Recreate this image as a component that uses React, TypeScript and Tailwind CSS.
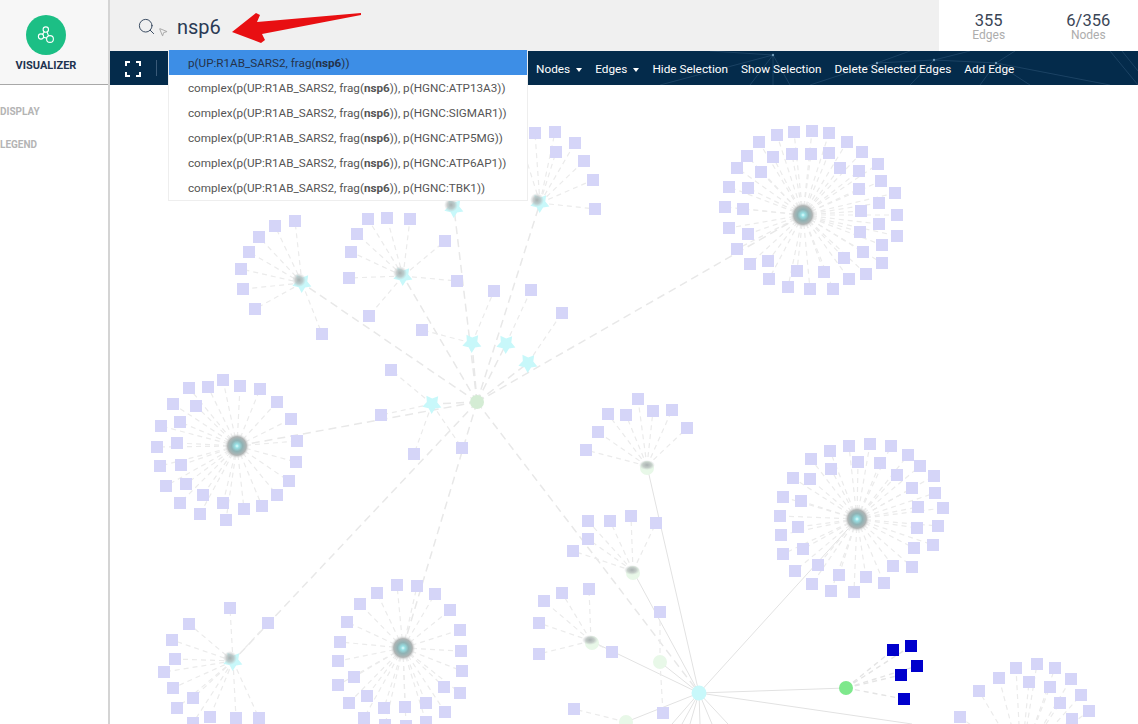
import { MousePointer2, Search } from "lucide-react";

type Pt = [number, number];

// each fan is a hub with its dashed leaf nodes, coordinates are page pixels
const fans: { hub: Pt; kids: Pt[] }[] = [
  {
    hub: [803, 215],
    kids: [[777, 135], [794, 132], [812, 131], [829, 133], [847, 142], [862, 152], [878, 164], [881, 181], [895, 193], [897, 215], [897, 236], [882, 245], [882, 263], [866, 274], [849, 279], [833, 289], [810, 289], [788, 287], [769, 279], [750, 264], [737, 249], [729, 228], [725, 207], [729, 187], [737, 168], [747, 156], [759, 142], [773, 157], [792, 154], [811, 154], [829, 153], [840, 168], [859, 171], [859, 189], [879, 203], [861, 211], [879, 224], [860, 232], [863, 252], [844, 258], [824, 272], [797, 271], [768, 261], [748, 234], [743, 209], [748, 188], [761, 172]],
  },
  {
    hub: [237, 446],
    kids: [[223, 380], [189, 388], [208, 387], [240, 386], [260, 389], [277, 402], [173, 404], [196, 406], [291, 419], [180, 422], [161, 426], [297, 441], [177, 443], [157, 447], [296, 462], [181, 465], [160, 466], [289, 481], [186, 484], [166, 486], [203, 495], [277, 495], [180, 503], [262, 506], [223, 503], [244, 509], [200, 514], [226, 520]],
  },
  {
    hub: [857, 519],
    kids: [[870, 444], [849, 446], [891, 446], [830, 451], [908, 455], [811, 459], [920, 466], [858, 462], [880, 463], [831, 469], [897, 475], [934, 476], [793, 478], [810, 479], [912, 488], [935, 493], [783, 497], [801, 501], [943, 508], [918, 507], [780, 516], [798, 527], [938, 526], [917, 528], [781, 535], [933, 545], [914, 548], [803, 549], [783, 554], [893, 566], [912, 567], [818, 565], [795, 571], [839, 575], [866, 577], [884, 583], [812, 584], [831, 591], [854, 592]],
  },
  {
    hub: [403, 648],
    kids: [[397, 585], [417, 586], [377, 593], [435, 594], [360, 604], [450, 610], [347, 622], [460, 630], [340, 642], [461, 651], [338, 661], [462, 671], [354, 677], [338, 685], [444, 687], [460, 693], [367, 696], [349, 703], [426, 703], [384, 708], [405, 707], [445, 712], [364, 718], [385, 725], [406, 726], [426, 722]],
  },
  {
    hub: [233, 661],
    kids: [[230, 608], [189, 624], [268, 623], [172, 640], [175, 659], [164, 672], [173, 688], [193, 698], [177, 708], [210, 717], [236, 718], [259, 718], [193, 723]],
  },
  { hub: [647, 466], kids: [[638, 399], [608, 414], [626, 415], [653, 411], [672, 410], [687, 428], [598, 432], [586, 450]] },
  { hub: [633, 571], kids: [[588, 521], [610, 521], [631, 516], [656, 523], [588, 539], [573, 551]] },
  { hub: [591, 641], kids: [[589, 589], [562, 593], [544, 601], [539, 623], [539, 654], [612, 652]] },
  { hub: [302, 283], kids: [[295, 221], [275, 226], [259, 237], [249, 252], [241, 269], [243, 289], [255, 309], [322, 334]] },
  { hub: [403, 276], kids: [[368, 219], [387, 218], [410, 219], [357, 234], [445, 241], [351, 252], [349, 278], [457, 281], [369, 316]] },
  { hub: [540, 203], kids: [[535, 133], [555, 132], [556, 152], [575, 143], [584, 161], [593, 180], [595, 209], [522, 146]] },
  { hub: [472, 343], kids: [[494, 291], [422, 330]] },
  { hub: [506, 344], kids: [[531, 290]] },
  { hub: [528, 363], kids: [[562, 313]] },
  { hub: [432, 404], kids: [[391, 370], [381, 415], [414, 454], [462, 448]] },
  { hub: [660, 662], kids: [[660, 612], [663, 713]] },
  { hub: [626, 722], kids: [[574, 709]] },
  { hub: [1021, 762], kids: [[1037, 664], [1016, 668], [1055, 668], [999, 678], [1071, 679], [979, 691], [1029, 682], [1050, 687], [1081, 695], [1060, 703], [1089, 711], [1072, 719], [960, 717]] },
];

const selected: Pt[] = [[893, 650], [911, 646], [917, 666], [901, 675], [904, 699]];

const longDashed: [Pt, Pt][] = [
  [[477, 402], [472, 343]],
  [[477, 402], [506, 344]],
  [[477, 402], [528, 363]],
  [[477, 402], [432, 404]],
  [[477, 402], [403, 276]],
  [[477, 402], [302, 283]],
  [[477, 402], [454, 208]],
  [[477, 402], [540, 203]],
  [[477, 402], [803, 215]],
  [[477, 402], [237, 446]],
  [[477, 402], [233, 661]],
  [[477, 402], [403, 648]],
  [[477, 402], [699, 693]],
];

const thinEdges: [Pt, Pt][] = [
  [[699, 693], [857, 519]],
  [[699, 693], [647, 466]],
  [[699, 693], [633, 571]],
  [[699, 693], [591, 641]],
  [[699, 693], [660, 662]],
  [[699, 693], [846, 688]],
  [[699, 693], [912, 724]],
  [[699, 693], [626, 722]],
  [[699, 693], [672, 724]],
  [[699, 693], [682, 724]],
  [[699, 693], [690, 724]],
  [[699, 693], [700, 724]],
  [[699, 693], [712, 724]],
  [[699, 693], [728, 724]],
];

// cyan hubs under a grey smudge
const starHubs: Pt[] = [[302, 283], [403, 276], [454, 208], [540, 203], [233, 661], [472, 343], [506, 344], [528, 363], [432, 404]];
const paleHubs: Pt[] = [[477, 402], [647, 468], [633, 573], [592, 643], [660, 662], [626, 722]];
const bigHubs: Pt[] = [[803, 215], [237, 446], [857, 519], [403, 648]];
const greySmudge: Pt[] = [[647, 465], [632, 570], [590, 640]];

function star([x, y]: Pt) {
  const pts: string[] = [];
  for (let i = 0; i < 10; i++) {
    const r = i % 2 === 0 ? 10 : 5.5;
    const a = (Math.PI / 5) * i + 0.35;
    pts.push(`${x + r * Math.cos(a)},${y + r * Math.sin(a)}`);
  }
  return pts.join(" ");
}

function Graph() {
  return (
    <svg viewBox="110 85 1028 639" className="block h-full w-full">
      <defs>
        <radialGradient id="bigHub">
          <stop offset="0%" stopColor="#e0ffff" />
          <stop offset="16%" stopColor="#98e0e4" />
          <stop offset="42%" stopColor="#8fb2b4" />
          <stop offset="72%" stopColor="#b0b4b4" />
          <stop offset="100%" stopColor="#ffffff" stopOpacity="0" />
        </radialGradient>
        <radialGradient id="smudge">
          <stop offset="0%" stopColor="#a8b0b0" />
          <stop offset="55%" stopColor="#b4baba" stopOpacity="0.7" />
          <stop offset="100%" stopColor="#c4caca" stopOpacity="0" />
        </radialGradient>
        <filter id="soft">
          <feGaussianBlur stdDeviation="0.5" />
        </filter>
      </defs>

      <g filter="url(#soft)">
        {longDashed.map(([a, b], i) => (
          <line key={i} x1={a[0]} y1={a[1]} x2={b[0]} y2={b[1]} stroke="#e8e8e8" strokeWidth="1.5" strokeDasharray="8 5" />
        ))}
        {thinEdges.map(([a, b], i) => (
          <line key={i} x1={a[0]} y1={a[1]} x2={b[0]} y2={b[1]} stroke="#e2e2e2" strokeWidth="1" />
        ))}
        {fans.map((f, i) =>
          f.kids.map((k, j) => (
            <line key={`${i}-${j}`} x1={f.hub[0]} y1={f.hub[1]} x2={k[0]} y2={k[1]} stroke="#ebebeb" strokeWidth="1.2" strokeDasharray="5 4" />
          )),
        )}
        {selected.map((k, i) => (
          <line key={i} x1={846} y1={688} x2={k[0]} y2={k[1]} stroke="#e4e4e4" strokeWidth="1.4" strokeDasharray="5 4" />
        ))}

        {fans.map((f, i) =>
          f.kids.map((k, j) => <rect key={`${i}-${j}`} x={k[0] - 6} y={k[1] - 6} width="12" height="12" fill="#d5d5f8" />),
        )}
        {selected.map((k, i) => (
          <rect key={i} x={k[0] - 6} y={k[1] - 6} width="12" height="12" fill="#0000cc" />
        ))}

        {paleHubs.map(([x, y], i) => (
          <circle key={i} cx={x} cy={y} r="7" fill={i === 0 ? "#d4ecd4" : "#e8f8e8"} />
        ))}
        {greySmudge.map(([x, y], i) => (
          <ellipse key={i} cx={x} cy={y} rx="8" ry="5" fill="url(#smudge)" />
        ))}
        {starHubs.map((p, i) => (
          <polygon key={i} points={star(p)} fill="#c8f8fa" />
        ))}
        {starHubs.slice(0, 5).map(([x, y], i) => (
          <circle key={i} cx={x - 3} cy={y - 3} r="7" fill="url(#smudge)" />
        ))}
        {bigHubs.map(([x, y], i) => (
          <circle key={i} cx={x} cy={y} r="13" fill="url(#bigHub)" />
        ))}
        <circle cx={699} cy={693} r="7.5" fill="#c8f8fa" />
        <circle cx={846} cy={688} r="7" fill="#7ee88c" />
      </g>
    </svg>
  );
}

const suggestions = ["ATP13A3", "SIGMAR1", "ATP5MG", "ATP6AP1", "TBK1"];

function Dropdown() {
  return (
    <div className="absolute left-[58px] top-[-1px] z-10 w-[360px] whitespace-nowrap border-x border-b border-[#eeeeee] bg-white text-[11.7px] text-[#555555]">
      <div className="flex h-[25px] items-center bg-[#3d8ee6] pl-[19px] pt-[2px] text-[#24324a]">
        <span>
          p(UP:R1AB_SARS2, frag(<b>nsp6</b>))
        </span>
      </div>
      {suggestions.map((s) => (
        <div key={s} className="flex h-[25px] items-center pl-[19px] pt-[2px]">
          <span>
            complex(p(UP:R1AB_SARS2, frag(<b>nsp6</b>)), p(HGNC:{s}))
          </span>
        </div>
      ))}
    </div>
  );
}

function Caret() {
  return <span className="ml-[6px] inline-block border-x-[3.5px] border-t-[4px] border-x-transparent border-t-white" />;
}

export default function App() {
  return (
    <div className="relative flex h-[724px] w-[1138px] overflow-hidden bg-white font-['Roboto',sans-serif]">
      {/* Sidebar */}
      <aside className="flex w-[110px] shrink-0 flex-col border-r-2 border-[#d4d4d4]">
        <div className="flex h-[85px] flex-col items-center border-b border-[#a8a8a8] bg-[#f7f7f7] pr-[16px] pt-[15px]">
          <div className="flex h-[40px] w-[40px] items-center justify-center rounded-full bg-[#1cbf85]">
            <svg viewBox="0 0 20 20" className="h-[20px] w-[20px]" fill="none" stroke="white" strokeWidth="1.1">
              <circle cx="9.8" cy="4.6" r="2.7" />
              <circle cx="5" cy="11.5" r="2.6" />
              <circle cx="14" cy="14" r="3.4" />
              <path d="M8.4 6.9 6.4 9.3M11 7l1.6 3.9M7.5 12.2l3.2.9" />
            </svg>
          </div>
          <div className="mt-[2px] text-[11px] font-bold leading-[18px] text-[#1e3350]">VISUALIZER</div>
        </div>
        <nav className="flex flex-col gap-[21px] pt-[21px] text-[10px] font-bold leading-[12px] text-[#b4b4b4]">
          <span>DISPLAY</span>
          <span>LEGEND</span>
        </nav>
      </aside>

      {/* Main column */}
      <div className="flex min-w-0 flex-1 flex-col">
        <header className="flex h-[51px] shrink-0">
          <div className="flex flex-1 items-center bg-[#f0f0f0] pl-[27px]">
            <Search size={19} strokeWidth={1.2} className="mt-[2px] text-[#33445c]" />
            <MousePointer2 size={10} strokeWidth={1.2} className="ml-[2px] mt-[13px] text-[#666666]" />
            <span className="ml-[9px] mt-[2px] text-[20px] leading-[24px] text-[#2a3a55]">nsp6</span>
          </div>
          <div className="flex w-[199px] shrink-0 bg-white pt-[13px] text-center">
            <div className="w-[100px]">
              <div className="text-[16.5px] leading-[16px] text-[#3a4556]">355</div>
              <div className="-mt-px text-[12px] leading-[14px] text-[#adadad]">Edges</div>
            </div>
            <div className="w-[100px]">
              <div className="text-[16.5px] leading-[16px] text-[#3a4556]">6/356</div>
              <div className="-mt-px text-[12px] leading-[14px] text-[#adadad]">Nodes</div>
            </div>
          </div>
        </header>

        {/* Toolbar */}
        <div className="relative flex h-[34px] shrink-0 items-center overflow-hidden bg-[#042b4b] text-[11.8px] text-white">
          <svg viewBox="0 0 1028 34" className="absolute inset-0 h-full w-full" fill="none" stroke="#2c5273" strokeWidth="0.6">
            <path d="M550 34 663 4 680 34M663 4V34M663 4 600 0M663 4 640 34M767 12 700 34M767 12 800 0M767 12 824 9 800 34M824 9 860 0M824 9 886 12 870 34M886 12 920 34M886 12 905 0M886 12 1000 34M1000 0 1028 34M1012 0 1028 20" />
            <g fill="#6f9ab8" stroke="none">
              <circle cx="663" cy="4" r="1.2" />
              <circle cx="767" cy="12" r="1.2" />
              <circle cx="824" cy="9" r="1.2" />
              <circle cx="886" cy="12" r="1.2" />
            </g>
          </svg>
          <div className="relative mt-[2px] flex w-[46px] justify-center">
            <svg viewBox="0 0 16 16" className="h-[16px] w-[16px]" fill="none" stroke="white" strokeWidth="2">
              <path d="M1 5V1h4M11 1h4v4M15 11v4h-4M5 15H1v-4" />
            </svg>
          </div>
          <div className="relative h-[16px] w-px bg-[#3a5a78]" />
          <div className="relative ml-[379px] mt-[3px] flex items-center gap-[13px]">
            <span className="flex items-center">
              Nodes
              <Caret />
            </span>
            <span className="flex items-center">
              Edges
              <Caret />
            </span>
            <span>Hide Selection</span>
            <span>Show Selection</span>
            <span>Delete Selected Edges</span>
            <span>Add Edge</span>
          </div>
        </div>

        {/* Canvas */}
        <div className="relative min-h-0 flex-1">
          <Graph />
          <div className="absolute inset-x-0 top-[-34px]">
            <Dropdown />
          </div>
        </div>
      </div>

      {/* Red annotation arrow */}
      <svg viewBox="0 0 1138 724" className="pointer-events-none absolute inset-0 z-20 h-full w-full">
        <polygon points="232,32 256,13 260,15 257,22 361,13 361,15 262,34 265,40 261,43" fill="#e80f12" />
      </svg>
    </div>
  );
}
